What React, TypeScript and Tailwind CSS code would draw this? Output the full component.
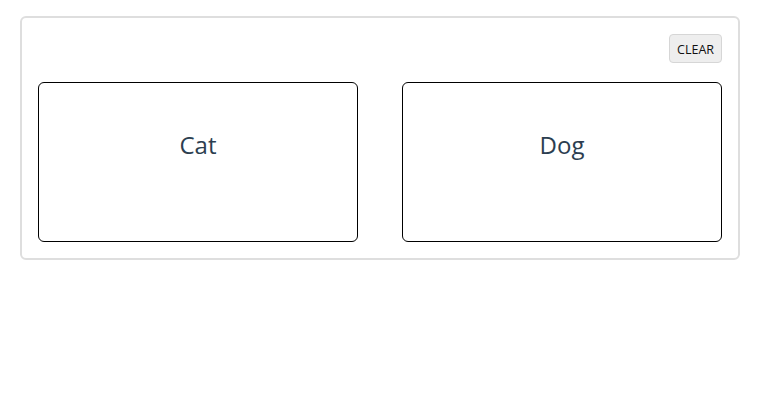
import React from 'react';

const animals = ['Cat', 'Dog'];

export default function App() {
  return (
    <div className="p-5 pt-4 font-['Open_Sans',sans-serif]">
      <div className="w-[720px] rounded-md border-2 border-[#dedede] px-4 pt-4 pb-4">
        <div className="flex justify-end">
          <button className="h-[29px] rounded border border-[#d6d6d6] bg-[#eeeeee] px-[7px] pt-[3px] text-[12.5px] text-[#111]">
            CLEAR
          </button>
        </div>
        <div className="mt-[19px] flex justify-between">
          {animals.map((name) => (
            <div
              key={name}
              className="h-[160px] w-[320px] rounded-md border border-black pt-[44px] text-center text-[24px] text-[#2c3e50]"
            >
              {name}
            </div>
          ))}
        </div>
      </div>
    </div>
  );
}
